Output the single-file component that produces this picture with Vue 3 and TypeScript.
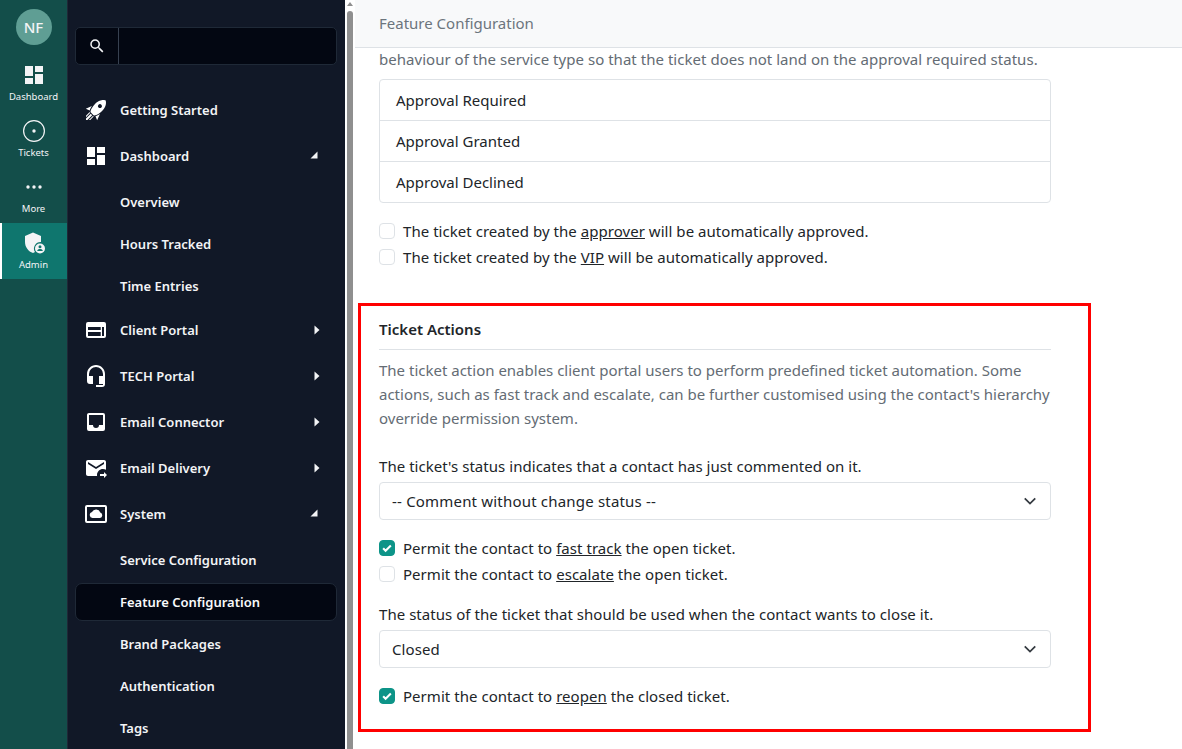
<script setup lang="ts">
const rail = [
  { label: 'Dashboard', kind: 'dash' },
  { label: 'Tickets', kind: 'ticket' },
  { label: 'More', kind: 'more' },
  { label: 'Admin', kind: 'admin', active: true },
]
const P: Record<string, string> = {
  rocket: 'M13.13 22.19L11.5 18.36C13.07 17.78 14.54 17 15.9 16.09L13.13 22.19M5.64 12.5L1.81 10.87L7.91 8.1C7 9.46 6.22 10.93 5.64 12.5M21.61 2.39C21.61 2.39 16.66 .269 11 5.93C8.81 8.12 7.5 10.53 6.65 12.64C6.37 13.39 6.56 14.21 7.11 14.77L9.24 16.89C9.79 17.45 10.61 17.63 11.36 17.35C13.5 16.53 15.88 15.19 18.07 13C23.73 7.34 21.61 2.39 21.61 2.39M14.54 9.46C13.76 8.68 13.76 7.41 14.54 6.63S16.59 5.85 17.37 6.63C18.14 7.41 18.15 8.68 17.37 9.46C16.59 10.24 15.32 10.24 14.54 9.46M6.24 22L9.88 18.36C9.54 18.27 9.21 18.12 8.91 17.91L4.83 22H6.24M2 22H3.41L8.18 17.24L6.76 15.83L2 20.59V22M2 19.17L6.09 15.09C5.88 14.79 5.73 14.47 5.64 14.12L2 17.76V19.17Z',
  dash: 'M13,3V9H21V3M13,21H21V11H13M3,21H11V15H3M3,13H11V3H3V13Z',
  portal: 'M4 4H20A2 2 0 0 1 22 6V18A2 2 0 0 1 20 20H4A2 2 0 0 1 2 18V6A2 2 0 0 1 4 4ZM4 9V12H16.7V9ZM4 14V18H16.7V14ZM18 9V18H20V9Z',
  headset: 'M12,1C7,1 3,5 3,10V17A3,3 0 0,0 6,20H9V12H5V10A7,7 0 0,1 12,3A7,7 0 0,1 19,10V12H15V20H19V21H12V23H18A3,3 0 0,0 21,20V10C21,5 17,1 12,1Z',
  inbox: 'M19,15H15A3,3 0 0,1 12,18A3,3 0 0,1 9,15H5V5H19M19,3H5C3.89,3 3,3.9 3,5V19A2,2 0 0,0 5,21H19A2,2 0 0,0 21,19V5A2,2 0 0,0 19,3Z',
  send: 'M13 19C13 15.69 15.69 13 19 13C20.1 13 21.12 13.3 22 13.81V6C22 4.89 21.1 4 20 4H4C2.89 4 2 4.89 2 6V18C2 19.11 2.9 20 4 20H13.09C13.04 19.67 13 19.34 13 19M4 8V6L12 11L20 6V8L12 13L4 8M20 22V20H16V18H20V16L23 19L20 22Z',
  system: 'M3 3H21A2 2 0 0 1 23 5V19A2 2 0 0 1 21 21H3A2 2 0 0 1 1 19V5A2 2 0 0 1 3 3ZM3 5V19H21V5ZM8.5 16A3 3 0 0 1 8 10.1A4.5 4.5 0 0 1 16.3 10.6A2.8 2.8 0 0 1 16 16Z',
}
const menu = [
  { label: 'Getting Started', icon: 'rocket', top: true },
  { label: 'Dashboard', icon: 'dash', top: true, caret: 'open' },
  { label: 'Overview', first: true },
  { label: 'Hours Tracked' },
  { label: 'Time Entries' },
  { label: 'Client Portal', icon: 'portal', top: true, caret: 'closed' },
  { label: 'TECH Portal', icon: 'headset', top: true, caret: 'closed' },
  { label: 'Email Connector', icon: 'inbox', top: true, caret: 'closed' },
  { label: 'Email Delivery', icon: 'send', top: true, caret: 'closed' },
  { label: 'System', icon: 'system', top: true, caret: 'open' },
  { label: 'Service Configuration', first: true },
  { label: 'Feature Configuration', active: true },
  { label: 'Brand Packages' },
  { label: 'Authentication' },
  { label: 'Tags' },
]
</script>

<template>
  <div class="app">
    <nav class="rail">
      <div class="avatar-wrap"><div class="avatar">NF</div></div>
      <a v-for="r in rail" :key="r.label" class="rail-item" :class="{ on: r.active }">
        <svg v-if="r.kind === 'dash'" viewBox="0 0 24 24" class="rail-icon"><path :d="P.dash" /></svg>
        <svg v-else-if="r.kind === 'ticket'" viewBox="0 0 24 24" class="rail-icon"><circle cx="12" cy="12" r="10.4" fill="none" stroke="currentColor" stroke-width="1.2" /><circle cx="12" cy="12" r="1.7" /></svg>
        <svg v-else-if="r.kind === 'more'" viewBox="0 0 24 24" class="rail-icon"><circle cx="6" cy="12" r="1.7" /><circle cx="12" cy="12" r="1.7" /><circle cx="18" cy="12" r="1.7" /></svg>
        <svg v-else viewBox="0 0 24 24" class="rail-icon"><path d="M11 1.5L3 5V11C3 16 6.4 20.6 11 22C11.7 21.8 12.4 21.5 13 21.1A6.6 6.6 0 0 1 19 11V5Z" /><path fill-rule="evenodd" d="M18 12.5A5 5 0 1 1 18 22.5A5 5 0 0 1 18 12.5ZM18 14.3A1.5 1.5 0 1 0 18 17.3A1.5 1.5 0 0 0 18 14.3ZM18 18C16.6 18 15.3 18.7 15.3 19.5V20H20.7V19.5C20.7 18.7 19.4 18 18 18Z" /></svg>
        <span>{{ r.label }}</span>
      </a>
    </nav>

    <aside class="side">
      <div class="search">
        <span class="search-btn"><svg viewBox="0 0 24 24"><path d="M9.5,3A6.5,6.5 0 0,1 16,9.5C16,11.11 15.41,12.59 14.44,13.73L14.71,14H15.5L20.5,19L19,20.5L14,15.5V14.71L13.73,14.44C12.59,15.41 11.11,16 9.5,16A6.5,6.5 0 0,1 3,9.5A6.5,6.5 0 0,1 9.5,3M9.5,5C7,5 5,7 5,9.5C5,12 7,14 9.5,14C12,14 14,12 14,9.5C14,7 12,5 9.5,5Z" /></svg></span>
        <span class="search-input"></span>
      </div>
      <ul class="menu">
        <li v-for="m in menu" :key="m.label" class="row" :class="{ top: m.top, active: m.active, first: m.first }">
          <span class="ico"><svg v-if="m.icon" viewBox="0 0 24 24"><path fill-rule="evenodd" :d="P[m.icon]" /></svg></span>
          <span class="lbl">{{ m.label }}</span>
          <svg v-if="m.caret === 'open'" class="caret" viewBox="0 0 8 8"><path d="M7.5 .5V7.5H.5Z" /></svg>
          <svg v-if="m.caret === 'closed'" class="caret closed" viewBox="0 0 8 12"><path d="M1.5 1.5L6.5 6L1.5 10.5Z" /></svg>
        </li>
      </ul>
    </aside>

    <div class="scrollbar">
      <span class="arrow"></span>
      <span class="thumb"></span>
    </div>

    <main class="main">
      <header class="head">Feature Configuration</header>
      <section class="content">
        <p class="clip muted">behaviour of the service type so that the ticket does not land on the approval required status.</p>
        <ul class="list">
          <li>Approval Required</li>
          <li>Approval Granted</li>
          <li>Approval Declined</li>
        </ul>
        <div class="checks first">
          <label class="check"><span class="box"></span>The ticket created by the&nbsp;<u>approver</u>&nbsp;will be automatically approved.</label>
          <label class="check"><span class="box"></span>The ticket created by the&nbsp;<u>VIP</u>&nbsp;will be automatically approved.</label>
        </div>

        <h3 class="title">Ticket Actions</h3>
        <p class="muted desc">The ticket action enables client portal users to perform predefined ticket automation. Some actions, such as fast track and escalate, can be further customised using the contact's hierarchy override permission system.</p>

        <div class="label l1">The ticket's status indicates that a contact has just commented on it.</div>
        <div class="select wide">-- Comment without change status --<svg viewBox="0 0 16 16"><path d="M2 5l6 6 6-6" /></svg></div>
        <div class="checks second">
          <label class="check"><span class="box on"><svg viewBox="0 0 20 20"><path d="M4.5 10.5l3.5 3.5 7.5-7.5" /></svg></span>Permit the contact to&nbsp;<u>fast track</u>&nbsp;the open ticket.</label>
          <label class="check"><span class="box"></span>Permit the contact to&nbsp;<u>escalate</u>&nbsp;the open ticket.</label>
        </div>
        <div class="label l2">The status of the ticket that should be used when the contact wants to close it.</div>
        <div class="select">Closed<svg viewBox="0 0 16 16"><path d="M2 5l6 6 6-6" /></svg></div>
        <div class="checks third">
          <label class="check"><span class="box on"><svg viewBox="0 0 20 20"><path d="M4.5 10.5l3.5 3.5 7.5-7.5" /></svg></span>Permit the contact to&nbsp;<u>reopen</u>&nbsp;the closed ticket.</label>
        </div>
      </section>
      <div class="annotation"></div>
    </main>
  </div>
</template>

<style>
html, body { margin: 0; height: 100%; overflow: hidden; }
</style>

<style scoped>
.app {
  display: flex;
  width: 1182px;
  height: 749px;
  overflow: hidden;
  background: #fff;
  font-family: "Noto Sans", "Open Sans", sans-serif;
  font-size: 15px;
  color: #212529;
}
.rail {
  width: 67px;
  flex: none;
  background: #134e4a;
  color: #f3f4f6;
}
.avatar-wrap { height: 55px; display: flex; justify-content: center; padding-top: 9px; box-sizing: border-box; }
.avatar {
  width: 36px; height: 36px; border-radius: 50%;
  background: #5f9e94; color: #f3f4f6;
  display: flex; align-items: center; justify-content: center;
  font-size: 15px; font-weight: 500;
}
.rail-item {
  height: 56px; display: flex; flex-direction: column; align-items: center;
  font-size: 9.5px; line-height: 14px; box-sizing: border-box; padding-top: 8px;
}
.rail-item span { margin-top: 3px; }
.rail-item.on { background: #0f766e; border-left: 2px solid #fff; padding-right: 2px; }
.rail-icon { width: 24px; height: 24px; fill: currentColor; display: block; flex: none; }
.side {
  width: 278px; flex: none; background: #111827; padding: 27px 8px 0 8px; box-sizing: border-box;
  border-left: 1px solid #1f2937; padding-left: 7px;
}
.search {
  display: flex; height: 38px; box-sizing: border-box; border: 1px solid #1f2937; border-radius: 5px;
  background: #030712;
}
.search-btn { width: 43px; display: flex; align-items: center; justify-content: center; border-right: 1px solid #374151; box-sizing: border-box; }
.search-btn svg { width: 18px; height: 18px; fill: #f3f4f6; }
.search-input { flex: 1; }
.menu { list-style: none; margin: 22px 0 0; padding: 0; }
.row {
  display: flex; align-items: center; height: 42px; box-sizing: border-box;
  color: #f3f4f6; font-size: 13px; font-weight: 600; border-radius: 7px; border: 1px solid transparent;
}
.row.first { margin-top: 2px; }
.row.top { height: 46px; }
.row.active { background: #030712; border-color: #1f2937; color: #f9fafb; height: 38px; margin: 2px 0; }
.ico { width: 44px; flex: none; display: flex; justify-content: flex-start; }
.ico svg { width: 24px; height: 24px; fill: #fff; margin-left: 8px; }
.lbl { flex: 1; }
.caret { width: 8px; height: 8px; fill: #f3f4f6; margin-right: 18px; margin-top: -3px; }
.caret.closed { width: 8px; height: 12px; margin-top: 0; margin-right: 15.5px; }
.scrollbar {
  width: 10px; flex: none; background: #fff; display: flex; flex-direction: column; align-items: center;
}
.arrow { width: 0; height: 0; border-left: 3px solid transparent; border-right: 3px solid transparent; border-bottom: 4px solid #8f8f8f; margin-top: 2px; }
.thumb { width: 6px; flex: 1; margin-top: 5px; background: #8f8f8f; border-radius: 3px 3px 0 0; }
.main { flex: 1; position: relative; min-width: 0; }
.head {
  height: 48px; box-sizing: border-box; background: #f8f9fa; border-bottom: 1px solid #dee2e6;
  padding: 0 24px 2px; display: flex; align-items: center; color: #6c757d; font-size: 15px;
}
.content { padding: 0 0 0 24px; width: 696px; box-sizing: border-box; }
p { margin: 0; }
.muted { color: #646c74; }
.clip { line-height: 24px; white-space: nowrap; margin-top: -1px; margin-bottom: 8px; letter-spacing: .03px; }
.list { list-style: none; margin: 0; padding: 0; border: 1px solid #dee2e6; border-radius: 4px; }
.list li { height: 40px; box-sizing: border-box; padding: 0 16px; display: flex; align-items: center; color: #212529; }
.list li + li { border-top: 1px solid #dee2e6; height: 41px; }
.checks.first { margin-top: 15px; }
.check { display: flex; align-items: center; height: 26px; line-height: 26px; white-space: pre; letter-spacing: .04px; }
.box {
  width: 16px; height: 16px; flex: none; box-sizing: border-box; border: 1px solid #dee2e6; border-radius: 4px;
  margin-right: 8px; background: #fff; display: flex;
}
.box.on { background: #0d9488; border-color: #0d9488; }
.box svg { width: 100%; height: 100%; fill: none; stroke: #fff; stroke-width: 3; }
.title { margin: 47px 0 0; font-size: 15px; font-weight: 600; line-height: 24px; padding-bottom: 8px; border-bottom: 1px solid #dee2e6; color: #212529; }
.desc { line-height: 24px; margin-top: 8px; }
.label { line-height: 24px; letter-spacing: .04px; }
.l1 { margin-top: 24px; margin-bottom: 4px; }
.l2 { margin-top: 15px; margin-bottom: 4px; }
.select {
  height: 38px; box-sizing: border-box; border: 1px solid #dee2e6; border-radius: 4px; padding: 0 12px;
  display: flex; align-items: center; justify-content: space-between; color: #212529; letter-spacing: .1px;
}
.select.wide { letter-spacing: .19px; }
.select svg { width: 14px; height: 14px; fill: none; stroke: #343a40; stroke-width: 2; margin-right: 1px; }
.checks.second { margin-top: 15px; }
.checks.third { margin-top: 15px; }
.annotation {
  position: absolute; left: 3px; top: 303px; width: 733px; height: 429px; box-sizing: border-box;
  border: 3px solid #f00; pointer-events: none;
}
</style>
